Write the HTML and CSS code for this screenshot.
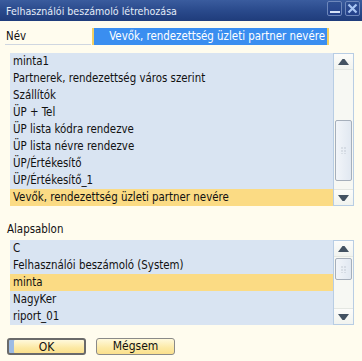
FILE: index.html
```html
<!DOCTYPE html>
<html>
<head>
<meta charset="utf-8">
<link rel="stylesheet" href="styles.css">
</head>
<body>
<div class="window">
  <div class="titlebar">
    <span class="title">Felhasználói beszámoló létrehozása</span>
    <div class="tb-buttons">
      <div class="tb-btn"><svg width="13" height="13" viewBox="0 0 13 13"><rect x="2" y="9" width="10" height="2" fill="#d8e4f8"/></svg></div>
      <div class="tb-btn"><svg width="13" height="13" viewBox="0 0 13 13"><path d="M2.5 2.5 L10.5 10.5 M10.5 2.5 L2.5 10.5" stroke="#a9c6f4" stroke-width="2.2"/></svg></div>
    </div>
  </div>

  <div class="name-row">
    <div class="name-label">Név</div>
    <div class="name-input"><span class="sel">Vevők, rendezettség üzleti partner nevére</span></div>
  </div>

  <div class="list list-1">
    <ul class="items">
      <li>minta1</li>
      <li>Partnerek, rendezettség város szerint</li>
      <li>Szállítók</li>
      <li>ÜP + Tel</li>
      <li>ÜP lista kódra rendezve</li>
      <li>ÜP lista névre rendezve</li>
      <li>ÜP/Értékesítő</li>
      <li>ÜP/Értékesítő_1</li>
      <li class="active">Vevők, rendezettség üzleti partner nevére</li>
    </ul>
    <div class="scrollbar">
      <div class="sb-btn sb-up"><svg width="11" height="6" viewBox="0 0 11 6"><polygon points="4.5,0 6.5,0 11,6 0,6" fill="#435262"/></svg></div>
      <div class="sb-track">
        <div class="thumb thumb-1"><span class="grip"></span></div>
      </div>
      <div class="sb-btn sb-down"><svg width="11" height="6" viewBox="0 0 11 6"><polygon points="0,0 11,0 6.5,6 4.5,6" fill="#435262"/></svg></div>
    </div>
  </div>

  <div class="section-label">Alapsablon</div>

  <div class="list list-2">
    <ul class="items">
      <li>C</li>
      <li>Felhasználói beszámoló (System)</li>
      <li class="active">minta</li>
      <li>NagyKer</li>
      <li>riport_01</li>
    </ul>
    <div class="scrollbar">
      <div class="sb-btn sb-up"><svg width="11" height="6" viewBox="0 0 11 6"><polygon points="4.5,0 6.5,0 11,6 0,6" fill="#435262"/></svg></div>
      <div class="sb-track">
        <div class="thumb thumb-2"><span class="grip"></span></div>
      </div>
      <div class="sb-btn sb-down"><svg width="11" height="6" viewBox="0 0 11 6"><polygon points="0,0 11,0 6.5,6 4.5,6" fill="#435262"/></svg></div>
    </div>
  </div>

  <div class="buttons">
    <button class="btn btn-default">OK</button>
    <button class="btn">Mégsem</button>
  </div>
</div>
</body>
</html>
```

FILE: styles.css
```css
* { box-sizing: border-box; }
html, body {
  margin: 0;
  padding: 0;
  background: #fffcee;
}
body {
  font-family: "DejaVu Sans Condensed", "DejaVu Sans", sans-serif;
  font-size: 11.4px;
  color: #111;
  width: 362px;
  height: 361px;
  overflow: hidden;
}
.titlebar {
  height: 21px;
  background: linear-gradient(#3a5c9e, #2a4a8c 50%, #1f3c7b);
  display: flex;
  align-items: center;
  justify-content: space-between;
  padding: 0 2px 0 6px;
}
.title {
  color: #e4ecf8;
  font-size: 10.6px;
}
.tb-buttons {
  display: flex;
  gap: 3px;
  align-self: flex-start;
  margin-top: 1px;
}
.tb-btn {
  width: 15px;
  height: 15px;
  border: 1px solid #6d87bb;
  border-radius: 2px;
  background: linear-gradient(#2e4f92, #24418a);
  display: flex;
  align-items: center;
  justify-content: center;
}
.name-row {
  display: flex;
  align-items: flex-end;
  margin-top: 7px;
  height: 17px;
}
.name-label {
  margin-left: 5px;
  width: 86px;
  height: 17px;
  border-bottom: 1px solid #cfd6e0;
  padding-left: 1px;
  line-height: 16px;
}
.name-input {
  margin-left: 1px;
  width: 237px;
  height: 17px;
  border-left: 2px solid #f2cf62;
  border-right: 2px solid #f2cf62;
  background: #3a8ef0;
  display: flex;
  justify-content: flex-end;
  overflow: hidden;
  padding-right: 2px;
}
.sel {
  flex-shrink: 0;
  color: #fff;
  white-space: nowrap;
  line-height: 17px;
}
.list {
  display: flex;
  margin-left: 10px;
  width: 344px;
  background: #d9e4f2;
}
.list-1 { margin-top: 8px; height: 153px; }
.list-2 { margin-top: 3px; height: 85px; }
.items {
  list-style: none;
  margin: 0;
  padding: 0;
  flex: 1;
}
.items li {
  height: 17px;
  line-height: 17px;
  padding-left: 3px;
  white-space: nowrap;
}
.items li.active { background: #fbdb84; }
.scrollbar {
  width: 21px;
  border: 1px solid #b8cde4;
  background: #f7f8f3;
  display: flex;
  flex-direction: column;
}
.sb-btn {
  height: 16px;
  display: flex;
  align-items: center;
  justify-content: center;
  background: linear-gradient(#fcfcfa, #f1f3ef);
}
.sb-up { border-bottom: 1px solid #e4e7e2; }
.sb-down { border-top: 1px solid #e4e7e2; }
.sb-track {
  flex: 1;
  padding: 0 1px;
}
.thumb {
  border: 1px solid #a6afbb;
  border-radius: 2px;
  background: linear-gradient(90deg, #f2f5f9, #e1e8f1);
  display: flex;
  align-items: center;
  justify-content: center;
}
.thumb-1 { margin-top: 50px; height: 61px; }
.thumb-2 { margin-top: 1px; height: 22px; }
.grip {
  width: 5px;
  height: 7px;
  background-image: radial-gradient(circle, #9ca6b2 0.8px, transparent 1px);
  background-size: 3px 3px;
  background-position: -0.5px -0.5px;
}
.section-label {
  margin-top: 15px;
  margin-left: 7px;
  height: 16px;
  line-height: 16px;
}
.buttons {
  display: flex;
  gap: 10px;
  margin-top: 13px;
  margin-left: 7px;
}
.btn {
  width: 79px;
  height: 17px;
  font-family: "DejaVu Sans Condensed", "DejaVu Sans", sans-serif;
  font-size: 12px;
  color: #111;
  background: linear-gradient(#fff9dc, #fce9a4 60%, #fbe08c);
  border: 1px solid #8a8a88;
  border-radius: 3px;
  padding: 0;
  line-height: 15px;
}
.btn-default {
  border: 2px solid #6a6a6a;
  box-shadow: inset 5px 0 0 #9dbbe4;
}
```
